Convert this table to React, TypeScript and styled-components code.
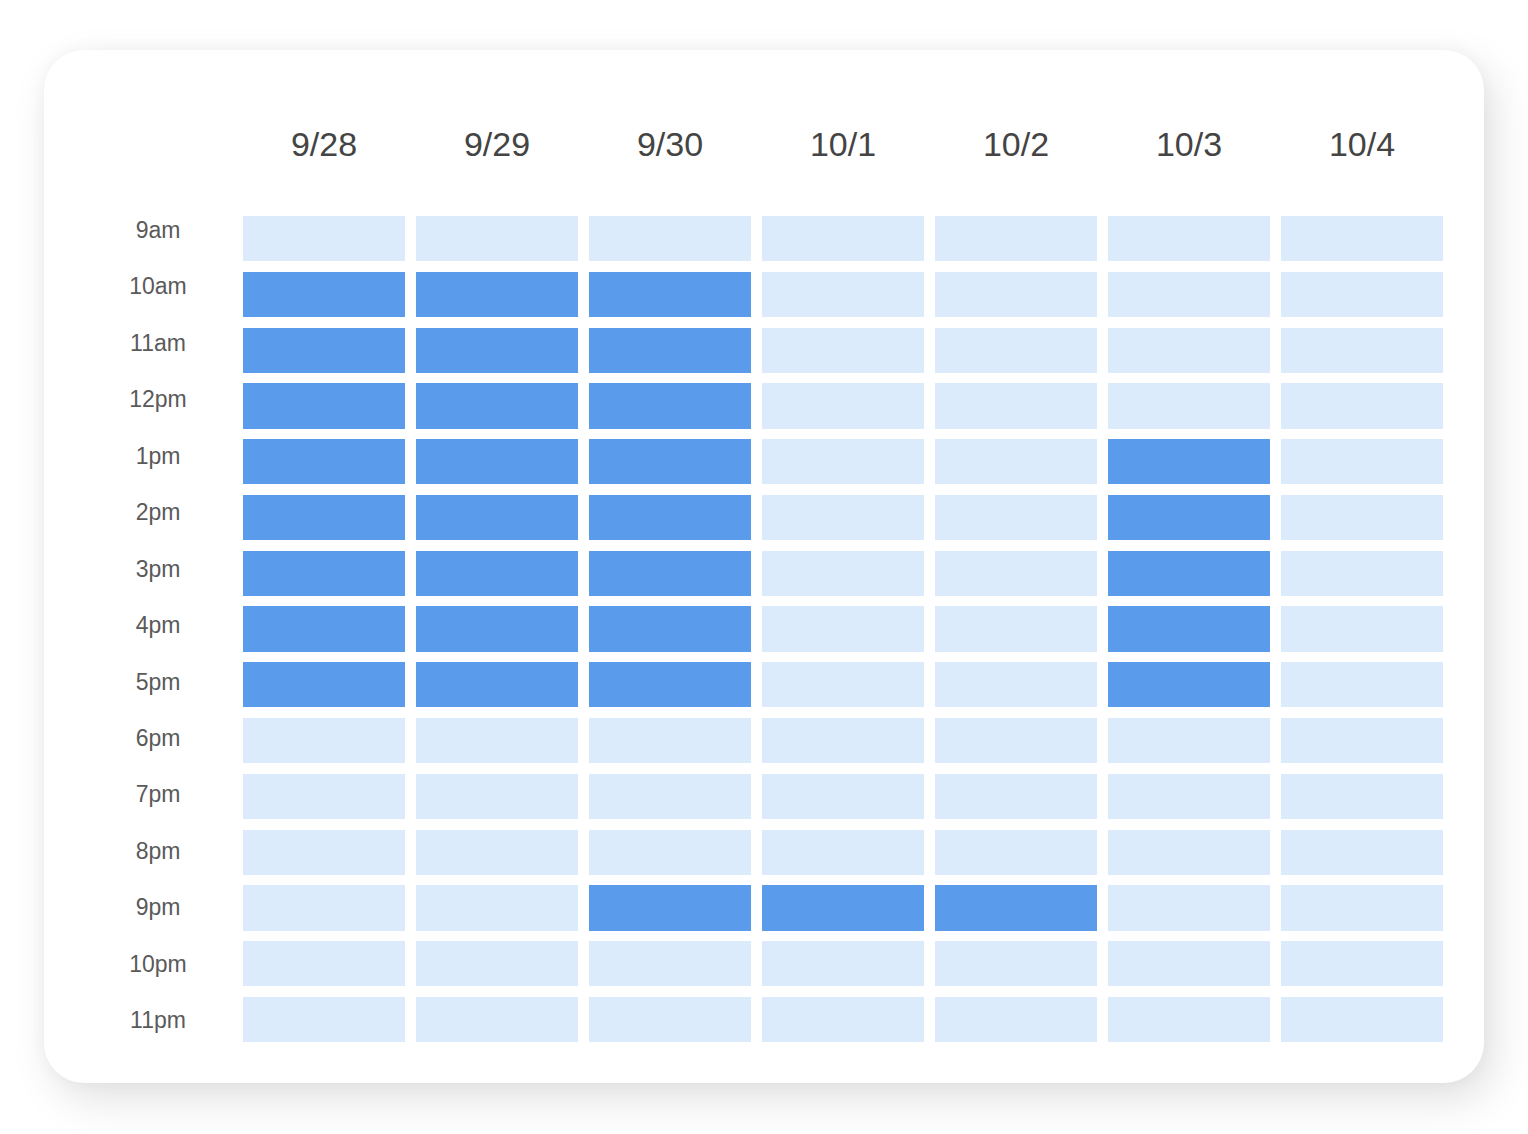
import React from 'react';
import styled, { createGlobalStyle } from 'styled-components';

const GlobalStyle = createGlobalStyle`
  html, body {
    margin: 0;
    padding: 0;
    background: #ffffff;
  }
  body {
    font-family: "Liberation Sans", Arial, sans-serif;
  }
`;

const Page = styled.div`
  min-height: 100vh;
  box-sizing: border-box;
  padding: 50px 0 50px 44px;
`;

const Card = styled.div`
  width: 1440px;
  box-sizing: border-box;
  padding: 75px 41px 41px 40px;
  background: #ffffff;
  border-radius: 40px;
  box-shadow: 10px 16px 44px rgba(0, 0, 0, 0.12), 0 0 18px rgba(0, 0, 0, 0.04);
`;

const HeaderRow = styled.div`
  display: grid;
  grid-template-columns: 148px repeat(7, 162px);
  column-gap: 11px;
  height: 91px;
`;

const DateLabel = styled.div`
  font-size: 34px;
  color: #444444;
  text-align: center;
`;

const Body = styled.div`
  display: flex;
  gap: 11px;
`;

const TimeAxis = styled.div`
  width: 148px;
  display: flex;
  flex-direction: column;
  justify-content: space-between;
`;

const TimeLabel = styled.div`
  height: 36px;
  font-size: 23px;
  color: #5a5a5a;
  text-align: center;
  padding-top: 1px;
  box-sizing: border-box;
`;

const Grid = styled.div`
  flex: 1;
  display: grid;
  grid-template-columns: repeat(7, 162px);
  grid-auto-rows: 45.2px;
  column-gap: 11px;
  row-gap: 10.6px;
`;

const Slot = styled.div<{ $on: boolean }>`
  background: ${(p) => (p.$on ? '#5b9beb' : '#dcebfb')};
`;

const dates = ['9/28', '9/29', '9/30', '10/1', '10/2', '10/3', '10/4'];
const times = [
  '9am', '10am', '11am', '12pm', '1pm', '2pm', '3pm', '4pm',
  '5pm', '6pm', '7pm', '8pm', '9pm', '10pm', '11pm',
];

// which day columns are booked for each hour row
function isOn(row: number, col: number) {
  if (col <= 2 && row >= 1 && row <= 8) return true;
  if (col === 5 && row >= 4 && row <= 8) return true;
  if (row === 12 && col >= 2 && col <= 4) return true;
  return false;
}

export default function App() {
  return (
    <Page>
      <GlobalStyle />
      <Card>
        <HeaderRow>
          <div />
          {dates.map((d) => (
            <DateLabel key={d}>{d}</DateLabel>
          ))}
        </HeaderRow>
        <Body>
          <TimeAxis>
            {times.map((t) => (
              <TimeLabel key={t}>{t}</TimeLabel>
            ))}
          </TimeAxis>
          <Grid>
            {times.map((t, r) =>
              dates.map((d, c) => <Slot key={t + d} $on={isOn(r, c)} />)
            )}
          </Grid>
        </Body>
      </Card>
    </Page>
  );
}
